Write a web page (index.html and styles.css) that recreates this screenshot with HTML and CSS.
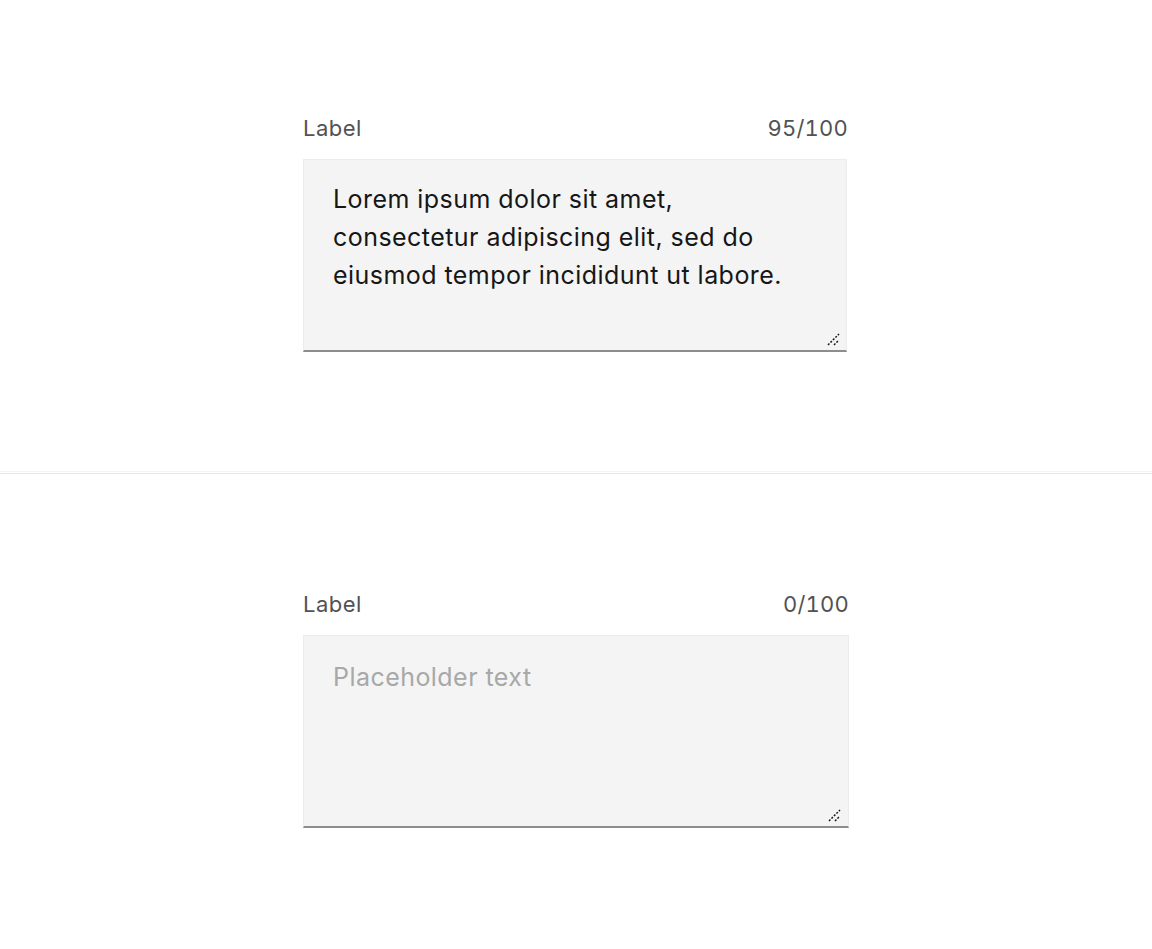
FILE: index.html
```html
<!DOCTYPE html>
<html lang="en">
<head>
<meta charset="utf-8">
<title>Text area</title>
<link rel="stylesheet" href="styles.css">
</head>
<body>
<section class="panel panel-top">
  <div class="field field-a">
    <div class="field-head">
      <label class="field-label" for="ta1">Label</label>
      <span class="field-count">95/100</span>
    </div>
    <div class="field-box">
      <textarea id="ta1" class="field-input" rows="4">Lorem ipsum dolor sit amet, consectetur adipiscing elit, sed do eiusmod tempor incididunt ut labore.</textarea>
      <svg class="grip" width="16" height="16" viewBox="0 0 16 16" aria-hidden="true">
        <line x1="3" y1="14" x2="14" y2="3"/>
        <line x1="9" y1="14" x2="14" y2="9"/>
      </svg>
    </div>
  </div>
</section>
<div class="divider"></div>
<section class="panel panel-bottom">
  <div class="field field-b">
    <div class="field-head">
      <label class="field-label" for="ta2">Label</label>
      <span class="field-count">0/100</span>
    </div>
    <div class="field-box">
      <textarea id="ta2" class="field-input" rows="4" placeholder="Placeholder text"></textarea>
      <svg class="grip" width="16" height="16" viewBox="0 0 16 16" aria-hidden="true">
        <line x1="3" y1="14" x2="14" y2="3"/>
        <line x1="9" y1="14" x2="14" y2="9"/>
      </svg>
    </div>
  </div>
</section>
</body>
</html>
```
FILE: styles.css
```css
html, body {
  margin: 0;
  padding: 0;
  background: #ffffff;
}
body {
  font-family: Inter, "Noto Sans", sans-serif;
  color: #161616;
}
.panel {
  display: flex;
  justify-content: center;
  box-sizing: border-box;
}
.panel-top {
  height: 471px;
  padding-top: 113px;
}
.panel-bottom {
  height: 476px;
  padding-top: 115px;
}
.divider {
  height: 0;
  border-top: 1px solid #f4f4f4;
  border-bottom: 1px solid #e8e8e8;
  padding-top: 1px;
}
.field {
  display: flex;
  flex-direction: column;
  width: 546px;
}
.field-a .field-box { width: 544px; }
.field-b .field-box { width: 546px; }
.field-head {
  display: flex;
  justify-content: space-between;
  align-items: center;
  height: 30px;
  line-height: 30px;
  color: #525252;
  margin-bottom: 16px;
}
.field-a .field-head { width: 545px; }
.field-label, .field-count {
  font-size: 22px;
  letter-spacing: 0.5px;
}
.field-count {
  font-variant-numeric: tabular-nums;
  letter-spacing: 0.2px;
}
.field-box {
  position: relative;
}
.field-input {
  display: block;
  box-sizing: border-box;
  width: 100%;
  height: 193px;
  margin: 0;
  padding: 20px 29px;
  background: #f4f4f4;
  border: 1px solid #ececec;
  border-bottom: 2px solid #8d8d8d;
  border-radius: 0;
  outline: none;
  font-family: Inter, "Noto Sans", sans-serif;
  font-size: 25px;
  letter-spacing: 0.45px;
  line-height: 38px;
  color: #161616;
  resize: none;
}
.field-b .field-input {
  padding-top: 22px;
}
.field-input::placeholder {
  color: #a8a8a8;
  opacity: 1;
}
.grip {
  position: absolute;
  right: 6px;
  bottom: 5px;
  stroke: #161616;
  stroke-width: 1.5;
  stroke-dasharray: 2 1.5;
  fill: none;
}
.field-b .grip {
  right: 7px;
  bottom: 5px;
}
```
